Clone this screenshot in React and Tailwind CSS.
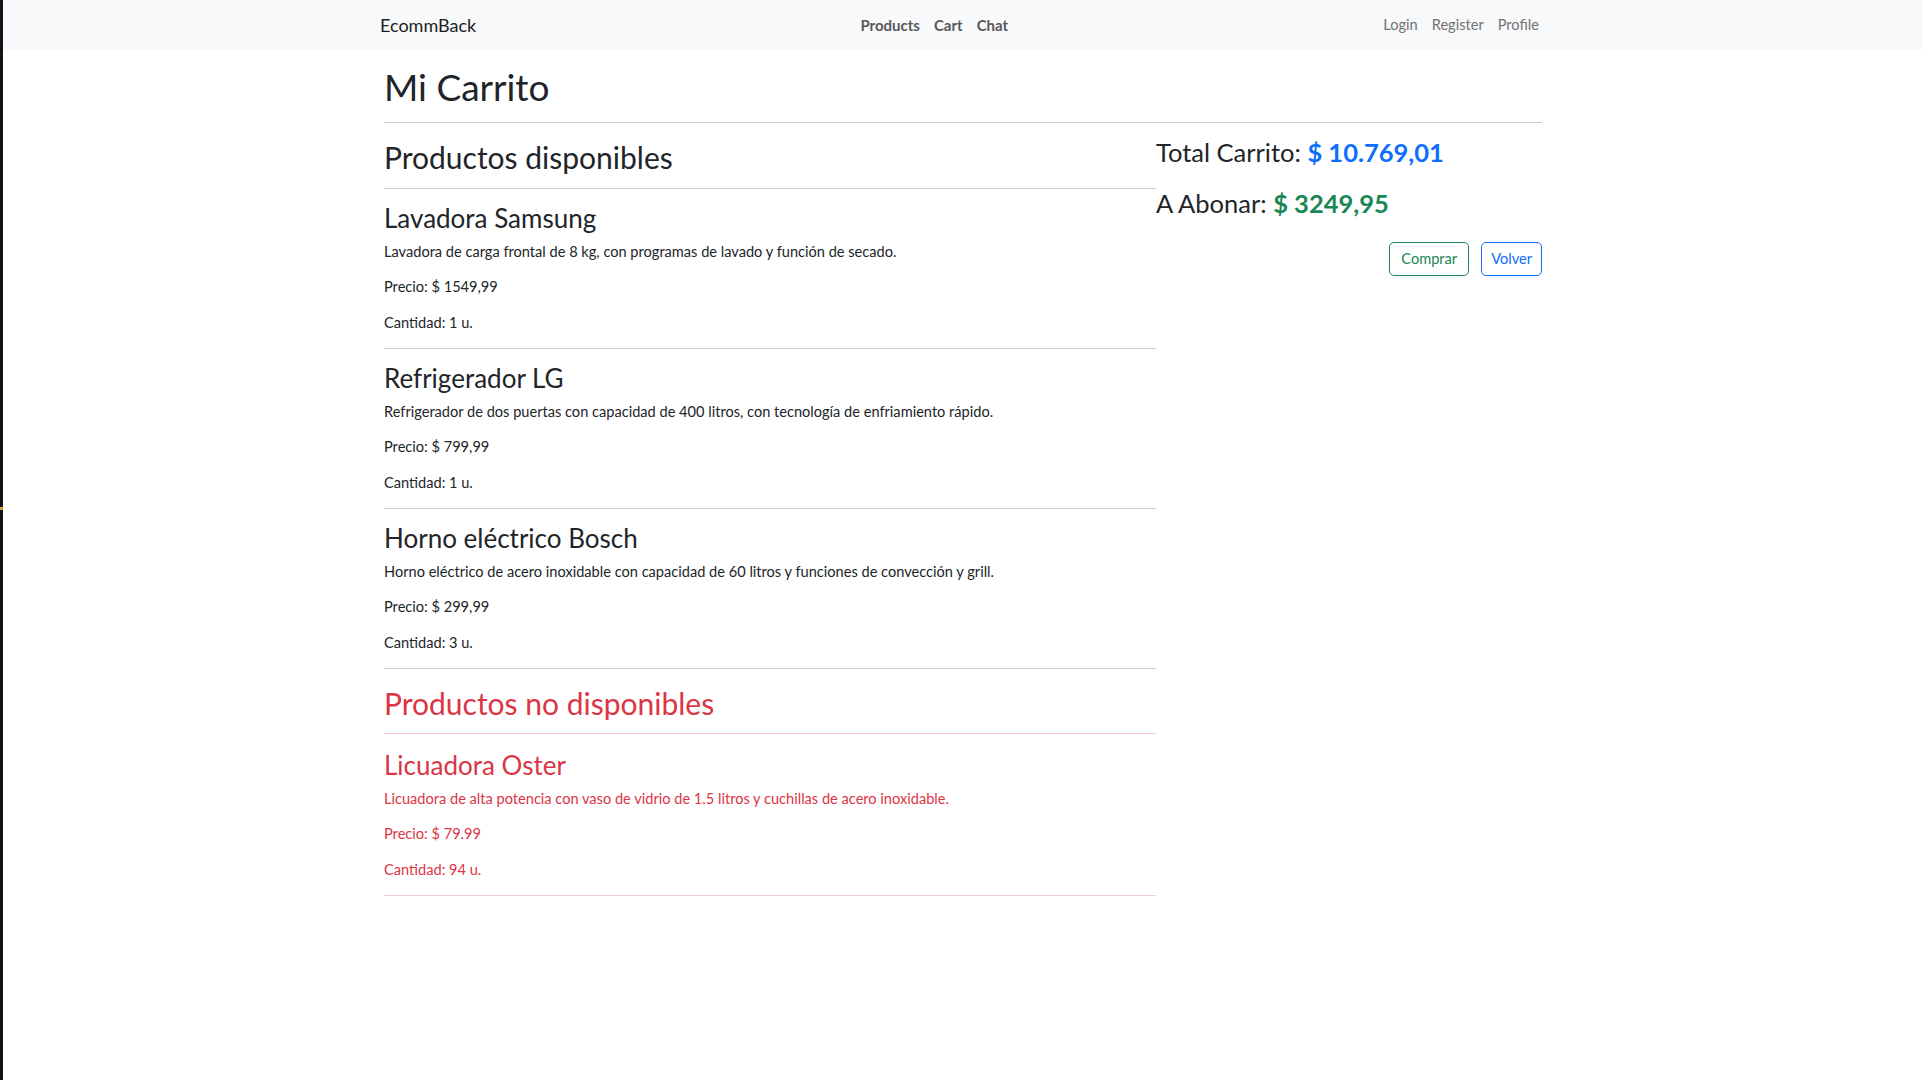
import React from 'react';

const available = [
  {
    name: 'Lavadora Samsung',
    desc: 'Lavadora de carga frontal de 8 kg, con programas de lavado y función de secado.',
    price: '1549,99',
    qty: 1,
  },
  {
    name: 'Refrigerador LG',
    desc: 'Refrigerador de dos puertas con capacidad de 400 litros, con tecnología de enfriamiento rápido.',
    price: '799,99',
    qty: 1,
  },
  {
    name: 'Horno eléctrico Bosch',
    desc: 'Horno eléctrico de acero inoxidable con capacidad de 60 litros y funciones de convección y grill.',
    price: '299,99',
    qty: 3,
  },
];

const unavailable = [
  {
    name: 'Licuadora Oster',
    desc: 'Licuadora de alta potencia con vaso de vidrio de 1.5 litros y cuchillas de acero inoxidable.',
    price: '79.99',
    qty: 94,
  },
];

function CartItem({ item, red }) {
  return (
    <div>
      <div className={red ? 'pt-[16px] pb-[15px]' : 'pt-[14px] pb-[15px]'}>
        <h3 className={`text-[26px] leading-[30px] ${red ? 'text-[#dc3545]' : 'text-[#212529]'}`}>{item.name}</h3>
        <p className="mt-[8px] text-[14.6px] leading-[21px]">{item.desc}</p>
        <p className="mt-[14px] text-[14.6px] leading-[21px]">Precio: $ {item.price}</p>
        <p className="mt-[15px] text-[14.6px] leading-[21px]">Cantidad: {item.qty} u.</p>
      </div>
      <div className={red ? 'h-px bg-[#f6ccd0]' : 'h-px bg-[#c8c9ca]'} />
    </div>
  );
}

function Navbar() {
  return (
    <nav className="bg-[#f8f9fa] h-[50px]">
      <div className="mx-auto w-[1166px] h-full flex items-center">
        <a href="#" className="text-[18px] text-[#1c1d1e] mr-4">EcommBack</a>
        <ul className="mx-auto flex text-[15px] font-bold text-[#56585a]">
          <li><a href="#" className="px-[7px]">Products</a></li>
          <li><a href="#" className="px-[7px]">Cart</a></li>
          <li><a href="#" className="px-[7px]">Chat</a></li>
        </ul>
        <ul className="flex text-[14.6px] text-[#727374]">
          <li><a href="#" className="px-[7px]">Login</a></li>
          <li><a href="#" className="px-[7px]">Register</a></li>
          <li><a href="#" className="px-[7px]">Profile</a></li>
        </ul>
      </div>
    </nav>
  );
}

export default function App() {
  return (
    <div className="min-h-screen flex bg-white text-[#212529]" style={{ fontFamily: 'Lato, "Noto Sans", sans-serif' }}>
      <div className="w-[3px] shrink-0 bg-[#111318] flex flex-col">
        <div className="h-[507px]" />
        <div className="h-[3px] bg-[#c9a227]" />
      </div>
      <div className="flex-1">
        <Navbar />
        <main className="mx-auto w-[1158px] pt-[15px] pb-10">
          <h1 className="text-[37px] leading-[44px] font-normal">Mi Carrito</h1>
          <div className="mt-[13px] h-px bg-[#c8c9ca]" />
          <div className="grid grid-cols-[2fr_1fr]">
            <div>
              <h2 className="mt-[16px] text-[30px] leading-[36px]">Productos disponibles</h2>
              <div className="mt-[13px] h-px bg-[#c8c9ca]" />
              {available.map((item) => (
                <CartItem key={item.name} item={item} />
              ))}
              <div className="text-[#dc3545]">
                <h2 className="mt-[16px] text-[30px] leading-[36px]">Productos no disponibles</h2>
                <div className="mt-[12px] h-px bg-[#f6ccd0]" />
                {unavailable.map((item) => (
                  <CartItem key={item.name} item={item} red />
                ))}
              </div>
            </div>
            <div className="pt-[15px]">
              <h3 className="text-[25.5px] leading-[29px]">
                Total Carrito: <span className="font-bold text-[#0d6efd]">$ 10.769,01</span>
              </h3>
              <h3 className="mt-[22px] text-[25.5px] leading-[29px]">
                A Abonar: <span className="font-bold text-[#198754]">$ 3249,95</span>
              </h3>
              <div className="mt-[24px] flex justify-end gap-[12px]">
                <button className="h-[34px] px-[11px] text-[14.6px] text-[#198754] border border-[#198754] rounded-[5px]">Comprar</button>
                <button className="h-[34px] px-[9px] text-[14.6px] text-[#0d6efd] border border-[#0d6efd] rounded-[5px]">Volver</button>
              </div>
            </div>
          </div>
        </main>
      </div>
    </div>
  );
}
